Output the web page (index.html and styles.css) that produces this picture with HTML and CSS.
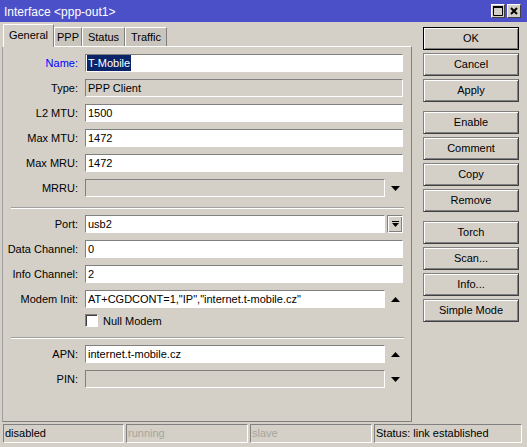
FILE: index.html
```html
<!DOCTYPE html>
<html lang="en">
<head>
    <meta charset="UTF-8">
    <title>Interface &lt;ppp-out1&gt;</title>
    <link rel="stylesheet" href="styles.css">
</head>
<body>
    <div class="window">
        <div class="titlebar">
            <span class="title">Interface &lt;ppp-out1&gt;</span>
            <div class="title-buttons">
                <span class="tbtn">
                    <svg width="10" height="10" viewBox="0 0 10 10"><path d="M0.5 1.5h9v8h-9z" fill="none" stroke="#000"/><rect x="0" y="0" width="10" height="2" fill="#000"/></svg>
                </span>
                <span class="tbtn">
                    <svg width="8" height="8" viewBox="0 0 8 8"><path d="M1 1L7 7M7 1L1 7" stroke="#000" stroke-width="2"/></svg>
                </span>
            </div>
        </div>

        <div class="main">
            <div class="left">
                <div class="tabs">
                    <div class="tab tab-general active">General</div>
                    <div class="tab tab-ppp">PPP</div>
                    <div class="tab tab-status">Status</div>
                    <div class="tab tab-traffic">Traffic</div>
                </div>
                <div class="panel">
                    <div class="section">
                        <div class="row">
                            <div class="label label-focus">Name:</div>
                            <div class="field"><span class="selected">T-Mobile</span></div>
                        </div>
                        <div class="row">
                            <div class="label">Type:</div>
                            <div class="field disabled">PPP Client</div>
                        </div>
                        <div class="row">
                            <div class="label">L2 MTU:</div>
                            <div class="field">1500</div>
                        </div>
                        <div class="row">
                            <div class="label">Max MTU:</div>
                            <div class="field">1472</div>
                        </div>
                        <div class="row">
                            <div class="label">Max MRU:</div>
                            <div class="field">1472</div>
                        </div>
                        <div class="row">
                            <div class="label">MRRU:</div>
                            <div class="field field-short disabled"></div>
                            <div class="arrow">
                                <svg width="9" height="5" viewBox="0 0 9 5"><polygon points="0,0 9,0 4.5,5" fill="#000"/></svg>
                            </div>
                        </div>
                    </div>

                    <div class="separator"></div>

                    <div class="section">
                        <div class="row">
                            <div class="label">Port:</div>
                            <div class="field field-short">usb2</div>
                            <div class="drop-button">
                                <svg width="7" height="7" viewBox="0 0 7 7"><rect x="0" y="0" width="7" height="1" fill="#000"/><polygon points="0,2 7,2 3.5,6" fill="#000"/></svg>
                            </div>
                        </div>
                        <div class="row">
                            <div class="label">Data Channel:</div>
                            <div class="field">0</div>
                        </div>
                        <div class="row">
                            <div class="label">Info Channel:</div>
                            <div class="field">2</div>
                        </div>
                        <div class="row">
                            <div class="label">Modem Init:</div>
                            <div class="field field-short">AT+CGDCONT=1,"IP","internet.t-mobile.cz"</div>
                            <div class="arrow">
                                <svg width="9" height="5" viewBox="0 0 9 5"><polygon points="0,5 9,5 4.5,0" fill="#000"/></svg>
                            </div>
                        </div>
                        <div class="check-row">
                            <div class="label"></div>
                            <span class="checkbox"></span>
                            <span>Null Modem</span>
                        </div>
                    </div>

                    <div class="separator"></div>

                    <div class="section">
                        <div class="row">
                            <div class="label">APN:</div>
                            <div class="field field-short">internet.t-mobile.cz</div>
                            <div class="arrow">
                                <svg width="9" height="5" viewBox="0 0 9 5"><polygon points="0,5 9,5 4.5,0" fill="#000"/></svg>
                            </div>
                        </div>
                        <div class="row">
                            <div class="label">PIN:</div>
                            <div class="field field-short disabled"></div>
                            <div class="arrow">
                                <svg width="9" height="5" viewBox="0 0 9 5"><polygon points="0,0 9,0 4.5,5" fill="#000"/></svg>
                            </div>
                        </div>
                    </div>
                </div>
            </div>

            <div class="buttons">
                <div class="btn-group">
                    <div class="btn btn-default">OK</div>
                    <div class="btn">Cancel</div>
                    <div class="btn">Apply</div>
                </div>
                <div class="btn-group">
                    <div class="btn">Enable</div>
                    <div class="btn">Comment</div>
                    <div class="btn">Copy</div>
                    <div class="btn">Remove</div>
                </div>
                <div class="btn-group">
                    <div class="btn">Torch</div>
                    <div class="btn">Scan...</div>
                    <div class="btn">Info...</div>
                    <div class="btn">Simple Mode</div>
                </div>
            </div>
        </div>

        <div class="statusbar">
            <div class="status status-1">disabled</div>
            <div class="status status-2 inactive">running</div>
            <div class="status status-3 inactive">slave</div>
            <div class="status status-4">Status: link established</div>
        </div>
    </div>
</body>
</html>
```

FILE: styles.css
```css
body{
    margin: 0;
    background-color: #d4d0c8;
    font-family: "Liberation Sans", Arial, sans-serif;
    font-size: 11px;
    color: #000;
}
.window{
    width: 527px;
    height: 447px;
    background-color: #d4d0c8;
}

/* title bar */
.titlebar{
    height: 22px;
    box-sizing: border-box;
    background-color: #4c50c8;
    display: flex;
    justify-content: space-between;
    padding: 3px 6px 0 4px;
}
.title{
    color: #fff;
    font-size: 12px;
    line-height: 19px;
}
.title-buttons{
    display: flex;
    gap: 2px;
    margin-top: 1px;
}
.tbtn{
    width: 14px;
    height: 14px;
    box-sizing: border-box;
    background-color: #d4d0c8;
    border: 1px solid;
    border-color: #fff #404040 #404040 #fff;
    display: flex;
    align-items: center;
    justify-content: center;
}

/* main area */
.main{
    display: flex;
    height: 402px;
}
.left{
    margin-left: 2px;
    width: 410px;
}
.tabs{
    display: flex;
    align-items: flex-end;
    height: 22px;
    margin-top: 2px;
    padding-left: 1px;
}
.tab{
    height: 19px;
    box-sizing: border-box;
    line-height: 18px;
    text-align: center;
    background-color: #c9c5bd;
    border-top: 1px solid #fff;
    border-left: 1px solid #fff;
    border-right: 1px solid #808080;
}
.tab.active{
    height: 23px;
    line-height: 20px;
    margin-bottom: -1px;
    background-color: #d4d0c8;
    position: relative;
    z-index: 1;
}
.tab-general{ width: 51px; }
.tab-ppp{ width: 28px; }
.tab-status{ width: 43px; }
.tab-traffic{ width: 42px; }

.panel{
    height: 376px;
    box-sizing: border-box;
    border: 1px solid;
    border-color: #fff #808080 #808080 #a0a0a0;
    padding: 7px 0 0 0;
}
.section{
    display: flex;
    flex-direction: column;
    gap: 7px;
}
.row{
    display: flex;
    align-items: center;
    height: 18px;
}
.label{
    width: 75px;
    margin-right: 7px;
    text-align: right;
    white-space: nowrap;
}
.label-focus{
    color: #0000ff;
}
.field{
    width: 318px;
    height: 18px;
    box-sizing: border-box;
    background-color: #fff;
    border: 1px solid;
    border-color: #808080 #fff #fff #808080;
    line-height: 16px;
    padding-left: 2px;
    white-space: nowrap;
    overflow: hidden;
}
.field-short{
    width: 300px;
}
.field.disabled{
    background-color: #d4d0c8;
}
.selected{
    background-color: #0a246a;
    color: #fff;
    margin-left: -1px;
    padding: 0 1px;
    display: inline-block;
}
.arrow{
    width: 16px;
    padding-left: 2px;
    display: flex;
    justify-content: center;
}
.drop-button{
    width: 16px;
    height: 18px;
    margin-left: 2px;
    box-sizing: border-box;
    border: 1px solid;
    border-color: #808080 #fff #fff #808080;
    box-shadow: inset 1px 1px #fff, inset -1px -1px #808080;
    display: flex;
    align-items: center;
    justify-content: center;
}
.check-row{
    display: flex;
    align-items: center;
    height: 13px;
    margin-top: -1px;
}
.checkbox{
    width: 13px;
    height: 13px;
    box-sizing: border-box;
    background-color: #fff;
    border: 1px solid;
    border-color: #808080 #fff #fff #808080;
    box-shadow: inset 1px 1px #404040;
    margin-right: 5px;
}
.separator{
    height: 0;
    border-top: 1px solid #a0a0a0;
    border-bottom: 1px solid #fff;
    margin: 10px 7px 6px 8px;
}

/* right buttons */
.buttons{
    margin-left: 11px;
    width: 96px;
    padding-top: 5px;
    display: flex;
    flex-direction: column;
    gap: 9px;
}
.btn-group{
    display: flex;
    flex-direction: column;
    gap: 3px;
}
.btn{
    height: 23px;
    box-sizing: border-box;
    border: 1px solid;
    border-color: #808080 #404040 #404040 #808080;
    box-shadow: inset 1px 1px #fff, inset -1px -1px #808080;
    text-align: center;
    line-height: 21px;
}
.btn-default{
    border-color: #000;
}

/* status bar */
.statusbar{
    display: flex;
    gap: 2px;
    padding-left: 3px;
}
.status{
    height: 19px;
    box-sizing: border-box;
    border: 1px solid;
    border-color: #808080 #fff #fff #808080;
    line-height: 17px;
    padding-left: 1px;
    white-space: nowrap;
}
.status.inactive{
    color: #a8a49c;
}
.status-1{ width: 121px; }
.status-2{ width: 122px; }
.status-3{ width: 122px; }
.status-4{ width: 148px; }
```
